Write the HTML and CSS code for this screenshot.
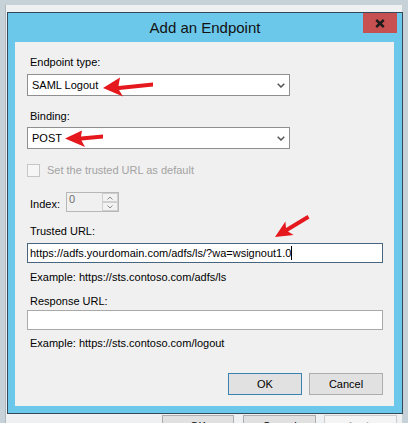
FILE: index.html
```html
<!DOCTYPE html>
<html>
<head>
<meta charset="utf-8">
<link rel="stylesheet" href="styles.css">
</head>
<body>
<div class="parent">
  <div class="dialog">
    <div class="titlebar">
      <span></span>
      <div class="title">Add an Endpoint</div>
      <div class="close-wrap">
        <div class="close">
          <svg width="10" height="9" viewBox="0 0 10 9"><path d="M1.2 1 L8.8 8 M8.8 1 L1.2 8" stroke="#1d1d1d" stroke-width="2.4" fill="none"/></svg>
        </div>
      </div>
    </div>
    <div class="content">
      <div class="lbl l1">Endpoint type:</div>
      <div class="combo c1"><span>SAML Logout</span><svg width="8" height="5" viewBox="0 0 8 5"><path d="M0.7 0.7 L4 4 L7.3 0.7" stroke="#555" stroke-width="1.5" fill="none"/></svg></div>
      <div class="lbl l2">Binding:</div>
      <div class="combo c2"><span>POST</span><svg width="8" height="5" viewBox="0 0 8 5"><path d="M0.7 0.7 L4 4 L7.3 0.7" stroke="#555" stroke-width="1.5" fill="none"/></svg></div>
      <div class="check-row"><span class="checkbox"></span><span class="check-text">Set the trusted URL as default</span></div>
      <div class="index-row">
        <span class="index-label">Index:</span>
        <div class="spin">
          <span class="spin-val">0</span>
          <div class="spin-btns">
            <span class="spin-btn"><svg width="6" height="4" viewBox="0 0 6 4"><path d="M0.5 3.5 L3 1 L5.5 3.5" stroke="#8a8a8a" stroke-width="1" fill="none"/></svg></span>
            <span class="spin-btn"><svg width="6" height="4" viewBox="0 0 6 4"><path d="M0.5 0.5 L3 3 L5.5 0.5" stroke="#8a8a8a" stroke-width="1" fill="none"/></svg></span>
          </div>
        </div>
      </div>
      <div class="lbl l3">Trusted URL:</div>
      <div class="textbox focused">https://adfs.yourdomain.com/adfs/ls/?wa=wsignout1.0<span class="caret"></span></div>
      <div class="lbl hint h1">Example: https://sts.contoso.com/adfs/ls</div>
      <div class="lbl l4">Response URL:</div>
      <div class="textbox tb2"></div>
      <div class="lbl hint h2">Example: https://sts.contoso.com/logout</div>
      <div class="actions">
        <button class="btn default">OK</button>
        <button class="btn">Cancel</button>
      </div>
    </div>
  </div>
  <div class="behind">
    <span class="bbtn b1">OK</span>
    <span class="bbtn b2">Cancel</span>
    <span class="bbtn b3">Apply</span>
  </div>
</div>
<svg class="arrows" width="408" height="423" viewBox="0 0 408 423">
  <path d="M103 88 L120 77.5 L118.5 86 L153 82.5 L153 86.5 L119 90 L123 96.5 Z" fill="#e5181e"/>
  <path d="M65 138.5 L82 130.5 L81 136.5 L103 134.5 L103 138.5 L81.5 140.5 L85 147 Z" fill="#e5181e"/>
  <path d="M275 237 L285.4 221.4 L286 228 L307.5 215.1 L309.5 218.5 L288 231.4 L293.6 235 Z" fill="#e5181e"/>
</svg>
</body>
</html>
```
FILE: styles.css
```css
html, body {
  margin: 0;
  padding: 0;
}
body {
  width: 408px;
  height: 423px;
  overflow: hidden;
  position: relative;
  background: #c6d2d8;
  font-family: "Liberation Sans", Arial, sans-serif;
  font-size: 11px;
  color: #000;
}
.parent {
  margin: 5px 0 0 5px;
  width: 397px;
  height: 418px;
  box-sizing: border-box;
  background: #eff0f1;
  border-left: 1px solid #aeb9bf;
  padding: 7px 0 0 1px;
}
.dialog {
  width: 396px;
  height: 402px;
  box-sizing: border-box;
  border: 1px solid #33495a;
  background: #6cc8ea;
  display: flex;
  flex-direction: column;
}
.titlebar {
  height: 29px;
  flex: none;
  display: grid;
  grid-template-columns: 1fr auto 1fr;
  align-items: start;
}
.title {
  font-size: 15px;
  line-height: 18px;
  margin-top: 6px;
  color: #121212;
  white-space: nowrap;
}
.close-wrap {
  display: flex;
  justify-content: flex-end;
}
.close {
  width: 34px;
  height: 20px;
  margin-right: 5px;
  background: #c75050;
  display: flex;
  align-items: center;
  justify-content: center;
}
.content {
  flex: 1;
  margin: 0 8px 7px 7px;
  background: #f0f0f0;
  padding: 14px 11px 0 12px;
  display: flex;
  flex-direction: column;
  align-items: flex-start;
}
.lbl {
  line-height: 13px;
  padding-left: 3px;
  white-space: nowrap;
}
.combo {
  width: 263px;
  height: 22px;
  box-sizing: border-box;
  border: 1px solid #8f8f8f;
  background: #fff;
  display: flex;
  align-items: center;
  justify-content: space-between;
  padding: 0 4px;
  line-height: 20px;
}
.c1 { margin-top: 5px; }
.l2 { margin-top: 14px; }
.c2 { margin-top: 4px; }
.check-row {
  margin-top: 15px;
  display: flex;
  align-items: center;
  gap: 7px;
  height: 13px;
}
.checkbox {
  width: 13px;
  height: 13px;
  box-sizing: border-box;
  border: 1px solid #c6c6c6;
  background: #f6f6f6;
}
.check-text {
  color: #a3a3a3;
  line-height: 13px;
}
.index-row {
  margin-top: 15px;
  display: flex;
  height: 20px;
}
.index-label {
  width: 36px;
  padding: 6px 0 0 3px;
  line-height: 13px;
}
.spin {
  width: 53px;
  height: 20px;
  box-sizing: border-box;
  border: 1px solid #b7b7b7;
  background: #f0f0f0;
  display: flex;
}
.spin-val {
  flex: 1;
  padding-left: 2px;
  line-height: 13px;
  color: #6d6d6d;
}
.spin-btns {
  width: 16px;
  display: flex;
  flex-direction: column;
}
.spin-btn {
  flex: 1;
  box-sizing: border-box;
  border: 1px solid #cfcfcf;
  background: #f2f2f2;
  display: flex;
  align-items: center;
  justify-content: center;
}
.l3 { margin-top: 13px; }
.textbox {
  margin-top: 5px;
  width: 356px;
  height: 20px;
  box-sizing: border-box;
  border: 1px solid #a9a9a9;
  background: #fff;
  line-height: 18px;
  padding-left: 2px;
  white-space: nowrap;
  display: flex;
  align-items: center;
}
.focused {
  border-color: #47657f;
}
.caret {
  display: inline-block;
  width: 1px;
  height: 14px;
  background: #000;
  margin-left: 0;
}
.h1 { margin-top: 8px; }
.l4 { margin-top: 11px; }
.tb2 { margin-top: 2px; }
.h2 { margin-top: 7px; }
.actions {
  margin-top: auto;
  margin-bottom: 11px;
  align-self: stretch;
  display: flex;
  justify-content: flex-end;
  gap: 7px;
}
.btn {
  width: 74px;
  height: 22px;
  box-sizing: border-box;
  border: 1px solid #adadad;
  background: #e1e1e1;
  font: inherit;
  color: #000;
  line-height: 20px;
  padding: 0;
}
.default {
  border-color: #3c7fb1;
}
.behind {
  display: flex;
  margin-top: 1px;
  padding-left: 155px;
}
.bbtn {
  height: 22px;
  box-sizing: border-box;
  border: 1px solid #adadad;
  background: #e1e1e1;
  line-height: 20px;
  text-align: center;
}
.b1 { width: 72px; }
.b2 { width: 73px; margin-left: 9px; }
.b3 {
  width: 73px;
  margin-left: 8px;
  background: #f4f4f4;
  border-color: #cccccc;
  color: #a0a0a0;
}
.arrows {
  position: absolute;
  top: 0;
  left: 0;
  pointer-events: none;
}
```
